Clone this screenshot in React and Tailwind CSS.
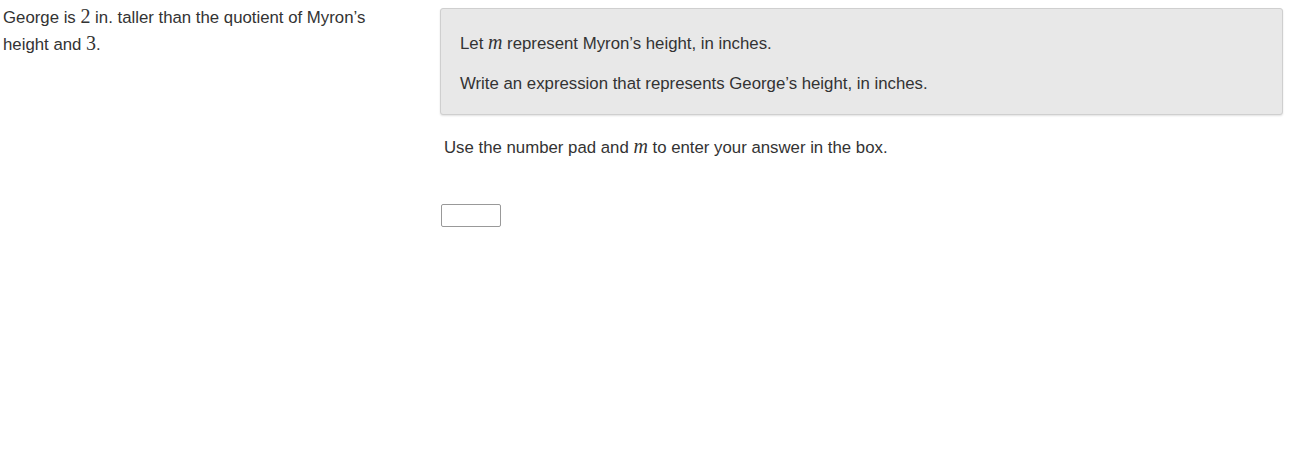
const sans = "font-['Liberation_Sans',Arial,sans-serif]";

function MathVar({ children }) {
  return (
    <span className="font-['Liberation_Serif','DejaVu_Serif',serif] text-[20px] italic leading-none">
      {children}
    </span>
  );
}

function MathNum({ children }) {
  return (
    <span className="font-['Liberation_Serif','DejaVu_Serif',serif] text-[20px] leading-none">
      {children}
    </span>
  );
}

export default function App() {
  return (
    <div className={`flex min-h-[469px] w-[1294px] bg-white text-[16.8px] text-[#333] ${sans}`}>
      <div className="w-[440px] shrink-0 pl-[3px] pr-[37px] pt-[4px] leading-[27px]">
        George is <MathNum>2</MathNum> in. taller than the quotient of Myron’s height and{" "}
        <MathNum>3</MathNum>.
      </div>

      <div className="flex-1 pr-[11px] pt-[8px]">
        <div className="rounded-[3px] border border-[#cfcfcf] bg-[#e8e8e8] px-[19px] pb-[19px] pt-[23px] shadow-[0_1px_2px_rgba(0,0,0,0.12)]">
          <p className="leading-[22px]">
            Let <MathVar>m</MathVar> represent Myron’s height, in inches.
          </p>
          <p className="mt-[18px] leading-[22px]">
            Write an expression that represents George’s height, in inches.
          </p>
        </div>

        <p className="mt-[21px] pl-[4px] leading-[22px]">
          Use the number pad and <MathVar>m</MathVar> to enter your answer in the box.
        </p>

        <div className="mt-[45px] pl-[1px]">
          <input
            type="text"
            aria-label="answer"
            className="block h-[23px] w-[60px] rounded-[2px] border border-[#999] bg-white"
          />
        </div>
      </div>
    </div>
  );
}
